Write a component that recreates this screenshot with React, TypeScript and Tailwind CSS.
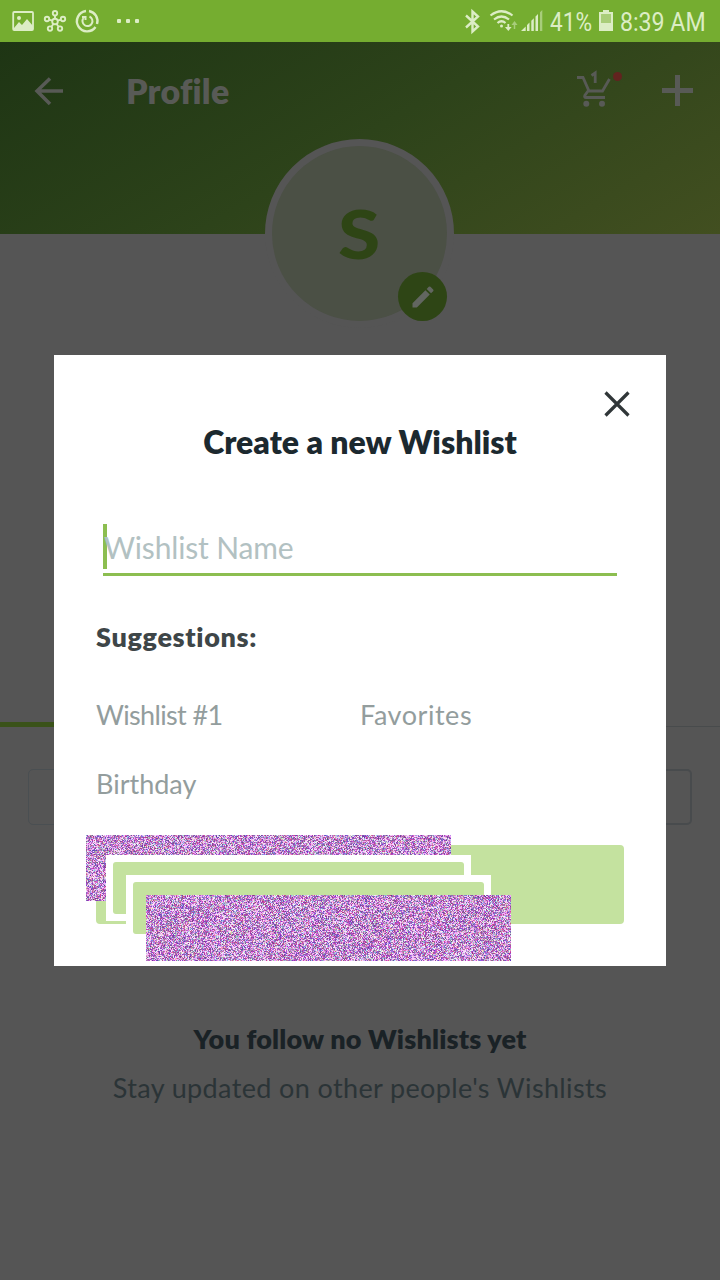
import { useEffect, useRef } from "react";

const LATO = "font-[Lato,'Open_Sans',sans-serif] [font-variant-ligatures:none]";

function Noise({ seed }: { seed: number }) {
  const ref = useRef<HTMLCanvasElement>(null);
  useEffect(() => {
    const ctx = ref.current?.getContext("2d");
    if (!ctx) return;
    const img = ctx.createImageData(365, 66);
    let s = seed;
    const rnd = () => {
      s = (s + 0x6d2b79f5) | 0;
      let t = Math.imul(s ^ (s >>> 15), 1 | s);
      t = (t + Math.imul(t ^ (t >>> 7), 61 | t)) ^ t;
      return ((t ^ (t >>> 14)) >>> 0) / 4294967296;
    };
    for (let i = 0; i < img.data.length; i += 4) {
      const light = rnd();
      img.data[i] = 90 + 115 * rnd() + 50 * light;
      img.data[i + 1] = 50 + 45 * rnd() + 150 * light * light;
      img.data[i + 2] = 125 + 80 * rnd() + 50 * light;
      img.data[i + 3] = 255;
      if (rnd() > 0.72) {
        img.data[i] = 244;
        img.data[i + 1] = 150 + 100 * rnd();
        img.data[i + 2] = 248;
      }
    }
    ctx.putImageData(img, 0, 0);
  }, [seed]);
  return <canvas ref={ref} width={365} height={66} className="block bg-[#c073c8]" />;
}

function StatusBar() {
  return (
    <div className="flex h-[42px] items-center bg-[#75ad30] text-[#dcedc5]">
      <svg className="ml-3 h-[42px] w-[130px]" viewBox="12 0 130 42" fill="none" stroke="currentColor">
        <rect x="13.200" y="12" width="19.800" height="18" rx="1" strokeWidth="1.800" />
        <path d="M14 28l5-6 3 3 5-6 6 7v4H14z" fill="currentColor" stroke="none" />
        <circle cx="19" cy="18" r="2" fill="currentColor" stroke="none" />
        <g strokeWidth="1.900">
          <circle cx="55" cy="21.500" r="2.800" />
          <circle cx="55" cy="13.200" r="2.200" />
          <circle cx="47" cy="19" r="2.200" />
          <circle cx="63" cy="19" r="2.200" />
          <circle cx="50" cy="28.600" r="2.200" />
          <circle cx="60" cy="28.600" r="2.200" />
          <path d="M55 15.500v3M49 19.700l3.400 1M61 19.700l-3.400 1M51.400 26.800l2-2.800M58.600 26.800l-2-2.800" />
        </g>
        <path d="M89 11a10.200 10.200 0 0 1 8 13M95.500 27A10.200 10.200 0 1 1 86 11" strokeWidth="2.400" />
        <path d="M89.500 16.500a5 5 0 1 1-6 1.500M82 17h3.500v3" strokeWidth="2" />
        <g fill="currentColor" stroke="none">
          <rect x="117" y="19" width="4" height="4" rx="1" />
          <rect x="126" y="19" width="4" height="4" rx="1" />
          <rect x="135" y="19" width="4" height="4" rx="1" />
        </g>
      </svg>
      <svg className="ml-auto h-[42px] w-[86px]" viewBox="460 0 86 42" fill="none" stroke="currentColor">
        <path d="M466 15.500l12 11-5.500 5V11.500l5.500 5L466 27.500" strokeWidth="2.400" />
        <g strokeWidth="2.200">
          <path d="M490.500 15.500q11-8.500 22 0M494 19.500q7.500-6 15 0M497.500 23q4-3.500 8 0" />
          <circle cx="501.500" cy="26" r="1.500" fill="currentColor" stroke="none" />
        </g>
        <path d="M508.300 24v4" strokeWidth="1.800" />
        <path d="M505 27h6.600l-3.300 4z" fill="currentColor" stroke="none" />
        <g opacity=".5">
          <path d="M514.500 24v5" strokeWidth="1.500" />
          <path d="M511.500 25l3-4 3 4z" fill="currentColor" stroke="none" />
        </g>
        <path d="M521 31l4.700-4.500V31zM527 31v-6l2.500-2.500V31zM531.300 31V20.700l2.500-2.500V31zM535.500 31V16.500L538 14v17z" fill="currentColor" stroke="none" />
        <path d="M540 31V12.200l2.300-2.200V31z" fill="currentColor" stroke="none" opacity=".5" />
      </svg>
      <div className="w-[50px] whitespace-nowrap pt-0.5 pl-1 font-[Roboto,sans-serif] text-[26px] leading-[40px]">
        <span className="inline-block origin-left scale-x-[0.87]">41%</span>
      </div>
      <svg className="ml-[2px] h-[42px] w-4" viewBox="598 0 16 42">
        <path d="M603 10h6v2h4v19h-14V12h4z" fill="#dcedc5" />
        <path d="M601 14h10v9h-10z" fill="#a9cd79" />
      </svg>
      <div className="w-[106px] whitespace-nowrap pt-0.5 pl-[6px] font-[Roboto,sans-serif] text-[26px] leading-[40px]">
        <span className="inline-block origin-left scale-x-[0.89]">8:39 AM</span>
      </div>
    </div>
  );
}

function Header() {
  return (
    <header className="flex h-48 items-start bg-linear-[150deg] from-[#1e3514] via-[#2d431a] to-[#424f20] text-[#585a56]">
      <svg className="mt-8 ml-8 size-9" viewBox="0 0 36 36" fill="none" stroke="currentColor" strokeWidth="3.500">
        <path d="M31 17H5M18 4.500L5 17l13 13" />
      </svg>
      <h1 className={`${LATO} mt-[26px] ml-[58px] text-[34px] leading-[46px] font-extrabold tracking-[0.2px]`}>Profile</h1>
      <svg className="mt-6 mr-9 ml-auto h-11 w-[50px]" viewBox="574 66 50 44" fill="none" stroke="currentColor" strokeWidth="2.800">
        <path d="M577 77.500h6l6 13.500h13.500L609.500 79M588 91l-3.200 4.500q-.8 2 1.200 2h19" />
        <circle cx="586.300" cy="103.700" r="3" fill="currentColor" stroke="none" />
        <circle cx="602" cy="103.700" r="3" fill="currentColor" stroke="none" />
        <path d="M591.500 75.500l3.700-2.500V83" />
        <circle cx="617.500" cy="76.500" r="4.500" fill="#62231f" stroke="none" />
      </svg>
      <svg className="mt-8 mr-[26px] size-[34px]" viewBox="0 0 34 34" fill="none" stroke="currentColor" strokeWidth="5">
        <path d="M17.500 1v31M2 16.500h31" />
      </svg>
    </header>
  );
}

function Modal() {
  return (
    <section className="absolute top-[355px] left-[54px] flex h-[611px] w-[612px] flex-col bg-white px-[42px]">
      <div className="flex justify-end pt-[35px]">
        <svg className="-mr-[7px] size-7" viewBox="0 0 28 28" fill="none" stroke="#303638" strokeWidth="3.200">
          <path d="M2.500 2.500l23 23M25.500 2.500l-23 23" />
        </svg>
      </div>
      <h2 className={`${LATO} mt-[2px] text-center text-[32px] leading-[44px] font-extrabold whitespace-nowrap text-[#1c292f]`}>
        Create a new Wishlist
      </h2>
      <div className="mx-[7px] mt-[60px] h-[52px] border-b-[3px] border-[#8cbe50]">
        <div className={`${LATO} h-[45px] border-l-4 border-[#8cbe50] text-[30px] leading-[46px] tracking-[-0.15px] whitespace-nowrap text-[#b2c1c2]`}>
          <span className="-ml-[3px]">Wishlist Name</span>
        </div>
      </div>
      <h3 className={`${LATO} mt-[41px] mb-px text-[27px] leading-10 font-extrabold tracking-[0.65px] text-[#3e4648]`}>
        Suggestions:
      </h3>
      <div className={`${LATO} mt-[37px] grid grid-cols-2 gap-y-[29px] text-[27px] leading-10 text-[#939d9d]`}>
        <span className="tracking-[-0.65px]">Wishlist #1</span>
        <span className="tracking-[0.55px]">Favorites</span>
        <span>Birthday</span>
      </div>
      <div className="relative mt-[41px] h-[79px] shrink-0 rounded bg-[#c4e29f]">
        <div className="absolute -top-[10px] -left-[10px]"><Noise seed={71} /></div>
        <div className="absolute top-[10px] left-[10px] h-[66px] w-[365px] bg-white p-[7px]">
          <div className="h-[52px] rounded-[3px] bg-[#c4e29f]" />
        </div>
        <div className="absolute top-[30px] left-[30px] h-[66px] w-[365px] bg-white p-[7px]">
          <div className="h-[52px] rounded-[3px] bg-[#c4e29f]" />
        </div>
        <div className="absolute top-[50px] left-[50px]"><Noise seed={923} /></div>
      </div>
    </section>
  );
}

export default function App() {
  return (
    <main className="relative flex h-[1280px] w-[720px] flex-col overflow-hidden bg-[#555]">
      <StatusBar />
      <Header />
      <div className="relative z-0 -mt-[95px] ml-[265px] flex size-[189px] shrink-0 items-center justify-center rounded-full border-[7px] border-[#555] bg-[#4b5045]">
        <span className={`${LATO} scale-x-[1.16] text-[66px] leading-none font-black text-[#2e4515]`}>S</span>
        <div className="absolute right-0 bottom-0 flex size-[49px] items-center justify-center rounded-full bg-[#2e4515]">
          <svg className="size-7" viewBox="0 0 24 24" fill="#626660">
            <path d="M3 17.250V21h3.750L17.810 9.940l-3.750-3.750zM20.710 7.040a1 1 0 0 0 0-1.410l-2.340-2.340a1 1 0 0 0-1.410 0l-1.830 1.830 3.750 3.750z" />
          </svg>
        </div>
      </div>
      <div className="mt-[393px] flex h-[6px] items-center">
        <div className="h-[5px] w-60 bg-[#3a5219]" />
        <div className="mt-[5px] h-px flex-1 bg-[#484b4c]" />
      </div>
      <div className="mt-[42px] mr-[28px] ml-[28px] flex h-14">
        <div className="flex-1 rounded-l-[5px] border border-[#4a4f52]" />
        <div className="flex-1 rounded-r-[5px] border-2 border-[#484b4d]" />
      </div>
      <div className={`${LATO} mt-[194px] text-center whitespace-nowrap`}>
        <p className="text-[27px] leading-10 font-extrabold tracking-[0.18px] text-[#1a2226]">You follow no Wishlists yet</p>
        <p className="mt-[9px] text-[27px] leading-10 tracking-[0.37px] text-[#2b3437]">Stay updated on other people's Wishlists</p>
      </div>
      <Modal />
    </main>
  );
}
